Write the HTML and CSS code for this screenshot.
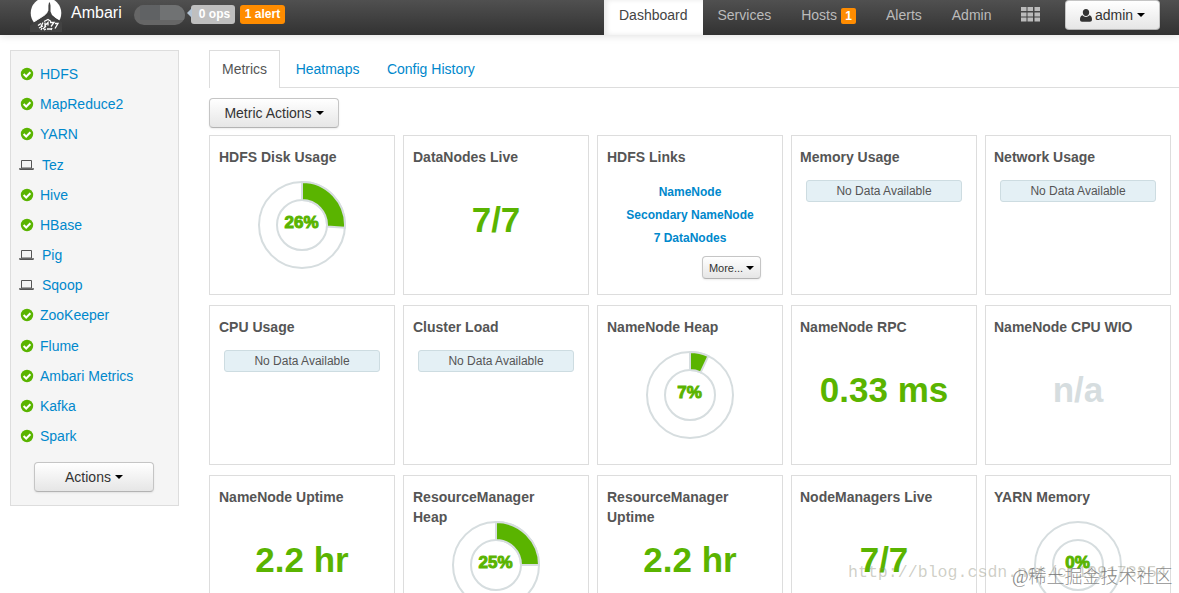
FILE: index.html
```html
<!DOCTYPE html>
<html lang="en">

<head>
  <meta charset="UTF-8">
  <title>Ambari</title>
  <link rel="stylesheet" href="styles.css">
</head>

<body>
  <svg class="defs" width="0" height="0">
    <symbol id="ok" viewBox="0 0 14 14">
      <circle cx="7" cy="7" r="6.2" fill="#5ab400" />
      <path d="M3.6 7.1L6.2 9.5L10.4 5.2" fill="none" stroke="#fff" stroke-width="2" />
    </symbol>
    <symbol id="laptop" viewBox="0 0 16 12">
      <path d="M3.500 9V1.500h10V9z" fill="none" stroke="#555" />
      <path d="M1 9.300h15v1l-1 .7H2l-1-.7z" fill="#555" />
    </symbol>
  </svg>
  <div class="navbar">
    <div class="brand">
      <svg class="logo" width="32" height="32" viewBox="0 0 32 32">
        <circle cx="16" cy="13" r="15.300" fill="#fff" />
        <path d="M19 2.500h.9l.6 3v6l1.500 3.500 3.500 3 6.500 4v10H0v-6.500l8-5.500 6-4 3-3 1.400-2.500v-5z" fill="#424242" />
        <path d="M3 23.500l9-5.500 7-4 6 4.500 4.500 3" fill="none" stroke="#3c3c3c" stroke-width="1" />
        <path d="M3.500 22l9-5.500 5-4" fill="none" stroke="#ddd" stroke-width=".5" />
        <path d="M8 25.500l3-2m2-1l-2 4m3-5l4-2 3 2m-6 1v3l3-3v3m2-3h4l-3 4m4-3h3l-3 5M9 28l4-2m0 3l3-3m1 3h4m-9-1l-1 2m5-1l-2 1m8-2l-1 2" fill="none" stroke="#fff" stroke-width="1.300" />
      </svg>
      <span class="name">Ambari</span>
      <span class="cluster"><i></i><i></i></span>
      <span class="ops">0 ops</span>
      <span class="alert">1 alert</span>
    </div>
    <div class="nav">
      <a class="active">Dashboard</a>
      <a>Services</a>
      <a>Hosts<span class="count">1</span></a>
      <a>Alerts</a>
      <a>Admin</a>
      <a><svg class="grid-icon" width="19" height="15" viewBox="0 0 19 15">
        <path d="M0 0h5.500v4H0zM6.500 0H12v4H6.500zM13.500 0H19v4h-5.500zM0 5.500h5.500v4H0zM6.500 5.500H12v4H6.500zM13.500 5.500H19v4h-5.500zM0 10.500h5.500v4H0zM6.500 10.500H12v4H6.500zM13.500 10.500H19v4h-5.500z" fill="#bbb" />
      </svg></a>
    </div>
    <div class="btn user">
      <svg width="12" height="13" viewBox="0 0 12 13">
        <path d="M6 0c2 0 3.2 1.4 3.2 3.3C9.2 5.400 7.900 7 6 7S2.800 5.400 2.800 3.300C2.800 1.400 4 0 6 0zM2.600 6.200C3.500 7.300 4.600 7.900 6 7.900s2.500-.6 3.400-1.700C11.300 6.500 12 8.300 12 10.500c0 1.500-.9 2.200-2 2.200H2c-1.100 0-2-.7-2-2.200 0-2.200.7-4 2.600-4.300z" fill="#333" />
      </svg>
      admin<b class="caret"></b>
    </div>
  </div>

  <div class="container">
    <div class="sidebar">
      <ul>
        <li><svg class="ok"><use href="#ok" /></svg>HDFS</li>
        <li><svg class="ok"><use href="#ok" /></svg>MapReduce2</li>
        <li><svg class="ok"><use href="#ok" /></svg>YARN</li>
        <li><svg class="laptop"><use href="#laptop" /></svg>Tez</li>
        <li><svg class="ok"><use href="#ok" /></svg>Hive</li>
        <li><svg class="ok"><use href="#ok" /></svg>HBase</li>
        <li><svg class="laptop"><use href="#laptop" /></svg>Pig</li>
        <li><svg class="laptop"><use href="#laptop" /></svg>Sqoop</li>
        <li><svg class="ok"><use href="#ok" /></svg>ZooKeeper</li>
        <li><svg class="ok"><use href="#ok" /></svg>Flume</li>
        <li><svg class="ok"><use href="#ok" /></svg>Ambari Metrics</li>
        <li><svg class="ok"><use href="#ok" /></svg>Kafka</li>
        <li><svg class="ok"><use href="#ok" /></svg>Spark</li>
      </ul>
      <div class="btn actions">Actions<b class="caret"></b></div>
    </div>

    <div class="main">
      <div class="tabs">
        <a class="active">Metrics</a>
        <a>Heatmaps</a>
        <a>Config History</a>
      </div>
      <div class="btn metric-actions">Metric Actions<b class="caret"></b></div>

      <div class="widgets">
        <div class="widget">
          <h4>HDFS Disk Usage</h4>
          <svg class="pie" viewBox="0 0 90 90">
            <circle cx="45" cy="45" r="43" />
            <circle cx="45" cy="45" r="25" />
            <path d="M45 2A43 43 0 0 1 87.900 47.700L69.950 46.600A25 25 0 0 0 45 20z" />
            <text x="44.500" y="48">26%</text>
          </svg>
        </div>
        <div class="widget">
          <h4>DataNodes Live</h4>
          <div class="value">7/7</div>
        </div>
        <div class="widget">
          <h4>HDFS Links</h4>
          <div class="links">
            <a>NameNode</a>
            <a>Secondary NameNode</a>
            <a>7 DataNodes</a>
          </div>
          <div class="btn more">More...<b class="caret"></b></div>
        </div>
        <div class="widget">
          <h4>Memory Usage</h4>
          <div class="no-data">No Data Available</div>
        </div>
        <div class="widget">
          <h4>Network Usage</h4>
          <div class="no-data">No Data Available</div>
        </div>

        <div class="widget">
          <h4>CPU Usage</h4>
          <div class="no-data">No Data Available</div>
        </div>
        <div class="widget">
          <h4>Cluster Load</h4>
          <div class="no-data">No Data Available</div>
        </div>
        <div class="widget">
          <h4>NameNode Heap</h4>
          <svg class="pie" viewBox="0 0 90 90">
            <circle cx="45" cy="45" r="43" />
            <circle cx="45" cy="45" r="25" />
            <path d="M45 2A43 43 0 0 1 63.300 6.100L55.640 22.380A25 25 0 0 0 45 20z" />
            <text x="44.500" y="48">7%</text>
          </svg>
        </div>
        <div class="widget">
          <h4>NameNode RPC</h4>
          <div class="value">0.33 ms</div>
        </div>
        <div class="widget">
          <h4>NameNode CPU WIO</h4>
          <div class="value na">n/a</div>
        </div>

        <div class="widget">
          <h4>NameNode Uptime</h4>
          <div class="value">2.2 hr</div>
        </div>
        <div class="widget">
          <h4>ResourceManager Heap</h4>
          <svg class="pie" viewBox="0 0 90 90">
            <circle cx="45" cy="45" r="43" />
            <circle cx="45" cy="45" r="25" />
            <path d="M45 2A43 43 0 0 1 88 45L70 45A25 25 0 0 0 45 20z" />
            <text x="44.500" y="48">25%</text>
          </svg>
        </div>
        <div class="widget">
          <h4>ResourceManager Uptime</h4>
          <div class="value">2.2 hr</div>
        </div>
        <div class="widget">
          <h4>NodeManagers Live</h4>
          <div class="value">7/7</div>
        </div>
        <div class="widget">
          <h4>YARN Memory</h4>
          <svg class="pie" viewBox="0 0 90 90">
            <circle cx="45" cy="45" r="43" />
            <circle cx="45" cy="45" r="25" />
            <text x="44.500" y="48">0%</text>
          </svg>
        </div>
      </div>
    </div>
  </div>
  <div class="mark-url">http://blog.csdn.net/cr109173854</div>
  <div class="mark">@稀土掘金技术社区</div>
</body>

</html>
```
FILE: styles.css
```css
* {
  margin: 0;
  padding: 0;
  box-sizing: border-box;
}

html {
  overflow: hidden;
}

body {
  width: 1179px;
  height: 593px;
  overflow: hidden;
  position: relative;
  background: #fff;
  color: #333;
  font: 14px/20px "Liberation Sans", Arial, sans-serif;
}

.defs {
  position: absolute;
}

/* top bar */
.navbar {
  display: flex;
  height: 35px;
  padding-left: 30px;
  background: linear-gradient(#505050, #323232);
  box-shadow: 0 1px 8px rgba(0, 0, 0, .12);
}

.brand {
  display: flex;
  width: 574px;
}

.name {
  width: 64px;
  margin-left: 9px;
  line-height: 26px;
  font-size: 16px;
  color: #fff;
}

.cluster {
  display: flex;
  width: 51px;
  height: 20px;
  margin-top: 5px;
  margin-left: -1px;
  padding-left: 6px;
  border-radius: 10px;
  background: #666;
  overflow: hidden;
}

.cluster i {
  width: 20px;
  height: 15px;
  background: #606264;
}

.cluster i + i {
  width: 25px;
  background: #707273;
}

.ops,
.alert {
  height: 19px;
  margin-top: 5px;
  border-radius: 3px;
  line-height: 19px;
  font-size: 12px;
  font-weight: bold;
  color: #fff;
  text-align: center;
}

.ops {
  position: relative;
  width: 44px;
  margin-left: 6px;
  padding-left: 3px;
  background: #bfbfbf;
}

.ops::before {
  content: "";
  position: absolute;
  left: -4px;
  top: 3px;
  border: 5px solid transparent;
  border-left: 0;
  border-right-color: #b3c3d3;
}

.alert {
  width: 45px;
  margin-left: 5px;
  background: #ff8c00;
}

.nav {
  display: flex;
  width: 461px;
}

.nav a {
  display: flex;
  padding: 5px 15px 0;
  color: #bbb;
}

.nav .active {
  padding: 5px 15px 0;
  background: #fff;
  box-shadow: inset 3px 0 5px rgba(0, 0, 0, .09);
  color: #444;
}

.count {
  width: 15px;
  height: 16px;
  margin: 3px 0 0 4px;
  border-radius: 2px;
  background: #ff8c00;
  line-height: 16px;
  font-size: 12px;
  font-weight: bold;
  color: #fff;
  text-align: center;
}

.grid-icon {
  margin-top: 2px;
}

.btn {
  display: flex;
  align-items: center;
  justify-content: center;
  height: 30px;
  border: 1px solid #c5c5c5;
  border-bottom-color: #b3b3b3;
  border-radius: 4px;
  background: linear-gradient(#fff, #e6e6e6);
  box-shadow: 0 1px 2px rgba(0, 0, 0, .08);
}

.caret {
  margin-left: 4px;
  border: 4px solid transparent;
  border-top-color: #000;
  border-bottom: 0;
}

.user {
  width: 95px;
}

.user svg {
  margin-right: 3px;
}

.container {
  display: flex;
  height: 558px;
  padding: 15px 0 0 10px;
  overflow: hidden;
}

/* services */
.sidebar {
  width: 169px;
  height: 456px;
  padding: 8px 9px 0;
  border: 1px solid #ddd;
  background: #f5f5f5;
}

.sidebar li {
  display: flex;
  align-items: center;
  height: 30.18px;
  color: #0088cc;
}

.ok {
  width: 14px;
  height: 14px;
  margin: 0 6.5px 0 -.5px;
}

.laptop {
  width: 16px;
  height: 12px;
  margin: 0 8px 0 -2px;
}

.actions {
  width: 120px;
  margin: 10.6px 0 0 14px;
}

.main {
  width: 970px;
  margin-left: 30px;
}

.tabs {
  display: flex;
  height: 38px;
  border-bottom: 1px solid #ddd;
}

.tabs a {
  height: 38px;
  padding: 9px 12px 0 15.5px;
  color: #0088cc;
}

.tabs .active {
  padding: 8px 12px 0;
  border: 1px solid #ddd;
  border-bottom: 0;
  background: #fff;
  color: #555;
}

.metric-actions {
  width: 130px;
  margin: 10px 0 7px;
}

.widgets {
  display: grid;
  grid-template-columns: repeat(5, 186px);
  grid-auto-rows: 160px;
  gap: 10px 8px;
}

.widget {
  position: relative;
  padding: 11px 9px 0;
  border: 1px solid #ddd;
  background: #fff;
}

.widget h4 {
  width: 150px;
  font-size: 14px;
  line-height: 20px;
  color: #555;
}

.widget:nth-child(5n + 4) h4,
.widget:nth-child(5n) h4 {
  margin-left: -1px;
}

/* the chart overlaps the second line of a long title */
.pie {
  position: absolute;
  left: 47px;
  top: 44px;
  width: 90px;
  height: 90px;
}

.pie circle {
  fill: none;
  stroke: #d6dddf;
  stroke-width: 2;
}

.pie path {
  fill: #5ab400;
  stroke: #d6dddf;
  stroke-width: 2;
}

.pie text {
  fill: #5ab400;
  stroke: #5ab400;
  font-size: 17px;
  font-weight: bold;
  text-anchor: middle;
}

.value {
  position: absolute;
  left: 0;
  right: 0;
  top: 64px;
  font-size: 35px;
  line-height: 40px;
  font-weight: bold;
  color: #5ab400;
  text-align: center;
}

.na {
  color: #d6dddf;
}

.links {
  display: flex;
  flex-direction: column;
  align-items: center;
  padding-top: 14px;
  font-size: 12px;
  line-height: 23px;
  font-weight: bold;
  color: #0088cc;
}

.more {
  width: 59px;
  height: 23px;
  margin: 6px 0 0 95px;
  font-size: 11px;
}

.more .caret {
  margin-left: 3px;
}

.no-data {
  width: 156px;
  height: 22px;
  margin: 13px 0 0 5px;
  border: 1px solid #cddce1;
  border-radius: 3px;
  background: #e4f0f5;
  line-height: 20px;
  font-size: 12px;
  color: #555;
  text-align: center;
}

.mark-url,
.mark {
  position: absolute;
  white-space: nowrap;
}

.mark-url {
  left: 848px;
  top: 563px;
  font: 16.6px/20px "Liberation Mono", monospace;
  color: rgba(140, 140, 120, .42);
}

.mark {
  left: 1012px;
  top: 565px;
  font: 18px/24px "Liberation Serif", "Noto Sans CJK SC", serif;
  font-weight: 300;
  color: rgba(90, 90, 90, .7);
}
```
